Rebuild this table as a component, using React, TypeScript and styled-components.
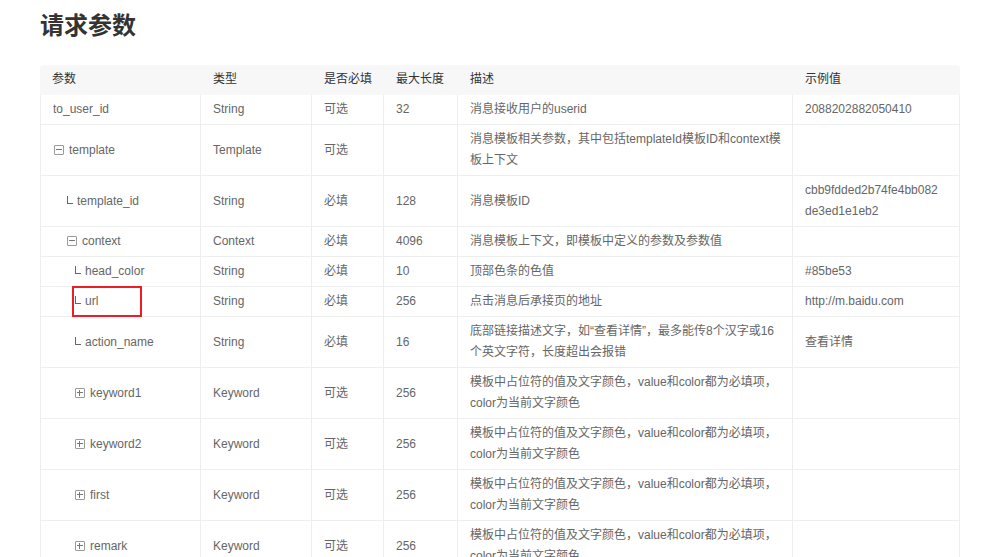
import React from "react";
import styled, { createGlobalStyle } from "styled-components";

const GlobalStyle = createGlobalStyle`
  html, body {
    margin: 0;
    padding: 0;
    background: #ffffff;
  }
  body {
    font-family: "Liberation Sans", "Noto Sans CJK SC", sans-serif;
    font-size: 12px;
    color: #666666;
  }
`;

const Page = styled.div`
  padding: 6px 21px 0 40px;
`;

const Title = styled.h1`
  margin: 0 0 23px;
  font-family: "Noto Sans CJK SC", sans-serif;
  font-size: 24px;
  line-height: 36px;
  font-weight: 700;
  color: #333333;
`;

const Table = styled.table`
  width: 920px;
  table-layout: fixed;
  border-collapse: separate;
  border-spacing: 0;
`;

const Col = styled.col<{ $w: number }>`
  width: ${(p) => p.$w}px;
`;

const HeadCell = styled.th`
  padding: 4px 12px 5px;
  line-height: 21px;
  text-align: left;
  font-weight: 400;
  color: #333333;
  background: #f7f7f7;
  &:first-child {
    border-top-left-radius: 4px;
  }
  &:last-child {
    border-top-right-radius: 4px;
  }
`;

const Cell = styled.td`
  position: relative;
  padding: 4px 12px;
  line-height: 21px;
  vertical-align: middle;
  color: #666666;
  white-space: pre;
  overflow: visible;
  border-bottom: 1px solid #eceef0;
  border-right: 1px solid #eceef0;
  &:first-child {
    border-left: 1px solid #eceef0;
  }
`;

const ParamName = styled.span<{ $indent: number }>`
  display: inline-block;
  padding-left: ${(p) => p.$indent}px;
`;

const Toggle = styled.span<{ $open: boolean }>`
  position: relative;
  display: inline-block;
  box-sizing: border-box;
  width: 10px;
  height: 10px;
  margin: 0 5px 0 1px;
  border: 1px solid #9a9a9a;
  border-radius: 1px;
  vertical-align: -1px;
  &::before {
    content: "";
    position: absolute;
    left: 1px;
    right: 1px;
    top: 3px;
    height: 1px;
    background: #777777;
  }
  &::after {
    content: "";
    display: ${(p) => (p.$open ? "none" : "block")};
    position: absolute;
    top: 1px;
    bottom: 1px;
    left: 3px;
    width: 1px;
    background: #777777;
  }
`;

const Branch = styled.span`
  display: inline-block;
  box-sizing: border-box;
  width: 6px;
  height: 8px;
  margin: 0 4px 0 1px;
  border-left: 1px solid #666666;
  border-bottom: 1px solid #666666;
  vertical-align: 1px;
`;

const Highlight = styled.span`
  position: absolute;
  top: -1px;
  left: 31px;
  width: 70px;
  height: 31px;
  box-sizing: border-box;
  border: 2px solid #ee1c24;
  pointer-events: none;
`;

type Kind = "none" | "open" | "closed" | "leaf";

interface Row {
  name: string;
  level: number;
  kind: Kind;
  type: string;
  req: string;
  len: string;
  desc: string;
  ex: string;
  highlight?: boolean;
}

const keywordDesc =
  "模板中占位符的值及文字颜色，value和color都为必填项，\ncolor为当前文字颜色";

const rows: Row[] = [
  { name: "to_user_id", level: 0, kind: "none", type: "String", req: "可选", len: "32", desc: "消息接收用户的userid", ex: "2088202882050410" },
  { name: "template", level: 0, kind: "open", type: "Template", req: "可选", len: "", desc: "消息模板相关参数，其中包括templateId模板ID和context模\n板上下文", ex: "" },
  { name: "template_id", level: 1, kind: "leaf", type: "String", req: "必填", len: "128", desc: "消息模板ID", ex: "cbb9fdded2b74fe4bb082\nde3ed1e1eb2" },
  { name: "context", level: 1, kind: "open", type: "Context", req: "必填", len: "4096", desc: "消息模板上下文，即模板中定义的参数及参数值", ex: "" },
  { name: "head_color", level: 2, kind: "leaf", type: "String", req: "必填", len: "10", desc: "顶部色条的色值", ex: "#85be53" },
  { name: "url", level: 2, kind: "leaf", type: "String", req: "必填", len: "256", desc: "点击消息后承接页的地址", ex: "http://m.baidu.com", highlight: true },
  { name: "action_name", level: 2, kind: "leaf", type: "String", req: "必填", len: "16", desc: "底部链接描述文字，如“查看详情”，最多能传8个汉字或16\n个英文字符，长度超出会报错", ex: "查看详情" },
  { name: "keyword1", level: 2, kind: "closed", type: "Keyword", req: "可选", len: "256", desc: keywordDesc, ex: "" },
  { name: "keyword2", level: 2, kind: "closed", type: "Keyword", req: "可选", len: "256", desc: keywordDesc, ex: "" },
  { name: "first", level: 2, kind: "closed", type: "Keyword", req: "可选", len: "256", desc: keywordDesc, ex: "" },
  { name: "remark", level: 2, kind: "closed", type: "Keyword", req: "可选", len: "256", desc: keywordDesc, ex: "" },
];

const indents = [0, 13, 21];
const widths = [161, 111, 72, 74, 335, 167];
const headers = ["参数", "类型", "是否必填", "最大长度", "描述", "示例值"];

export default function App() {
  return (
    <>
      <GlobalStyle />
      <Page>
        <Title>请求参数</Title>
        <Table>
          <colgroup>
            {widths.map((w, i) => (
              <Col key={i} $w={w} />
            ))}
          </colgroup>
          <thead>
            <tr>
              {headers.map((h) => (
                <HeadCell key={h}>{h}</HeadCell>
              ))}
            </tr>
          </thead>
          <tbody>
            {rows.map((r) => (
              <tr key={r.name}>
                <Cell>
                  <ParamName $indent={indents[r.level]}>
                    {r.kind === "open" && <Toggle $open />}
                    {r.kind === "closed" && <Toggle $open={false} />}
                    {r.kind === "leaf" && <Branch />}
                    {r.name}
                  </ParamName>
                  {r.highlight && <Highlight />}
                </Cell>
                <Cell>{r.type}</Cell>
                <Cell>{r.req}</Cell>
                <Cell>{r.len}</Cell>
                <Cell>{r.desc}</Cell>
                <Cell>{r.ex}</Cell>
              </tr>
            ))}
          </tbody>
        </Table>
      </Page>
    </>
  );
}
